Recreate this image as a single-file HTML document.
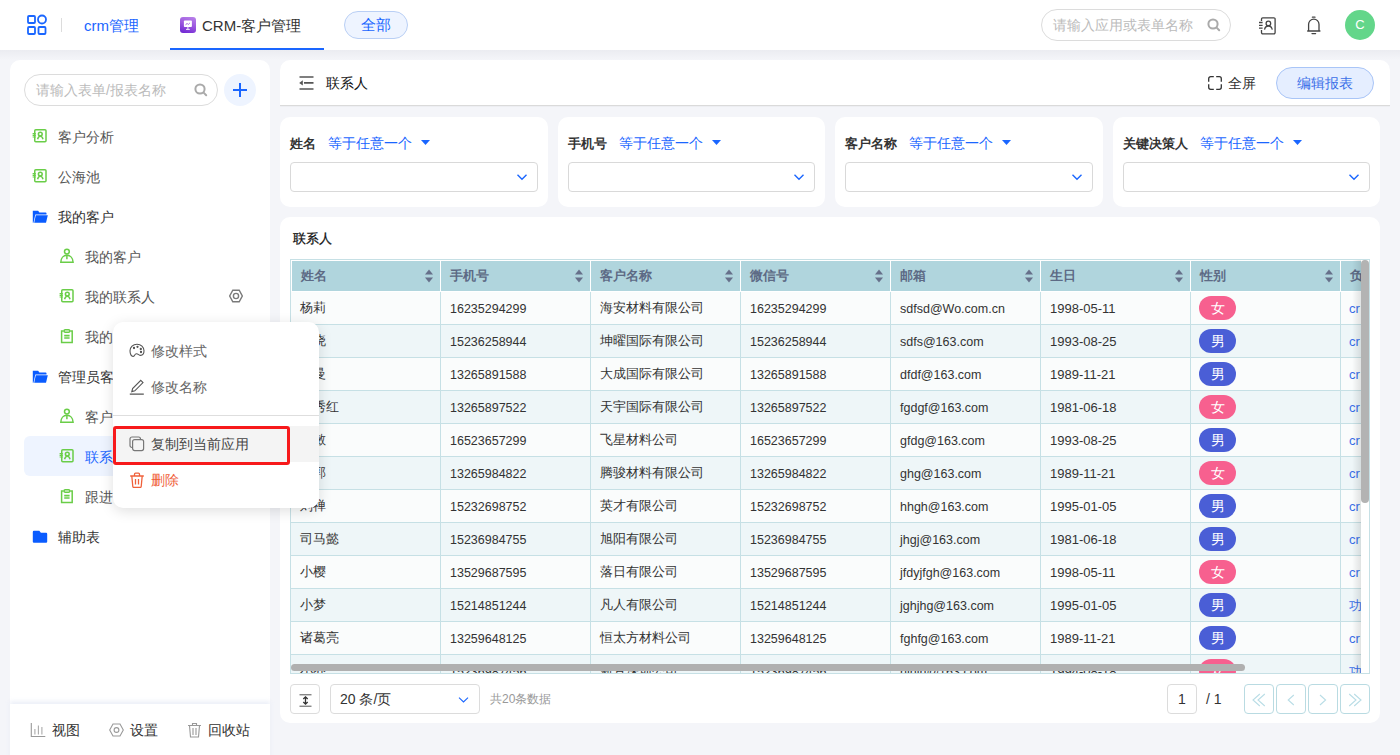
<!DOCTYPE html>
<html><head><meta charset="utf-8">
<style>
*{box-sizing:border-box;margin:0;padding:0}
html,body{width:1400px;height:755px;overflow:hidden}
body{position:relative;background:#f4f5f9;font-family:"Liberation Sans",sans-serif;font-size:14px;color:#333}
.abs{position:absolute}
svg{display:block}
/* top bar */
#top{left:0;top:0;width:1400px;height:50px;background:#fff}
/* sidebar */
#side{left:10px;top:60px;width:260px;height:705px;background:#fff;border-radius:10px}
.sitem{position:absolute;height:40px;line-height:42px;font-size:14px;color:#555;white-space:nowrap}
.sitem .ic{position:absolute;top:0}
/* main */
#hdr{left:280px;top:60px;width:1110px;height:46px;background:#fff;border-radius:10px 10px 0 0;border-bottom:1px solid #dadada;box-shadow:0 1px 1px rgba(0,0,0,0.03)}
.fcard{position:absolute;top:117px;height:90px;background:#fff;border-radius:10px}
.flabel{position:absolute;left:10px;top:16px;font-weight:bold;font-size:13px;line-height:20px;color:#333;white-space:nowrap}
.fop{color:#1a66ff;font-weight:normal;margin-left:12px;font-size:14px}
.fsel{position:absolute;left:10px;top:45px;height:30px;border:1px solid #d9d9d9;border-radius:4px}
#tcard{left:280px;top:217px;width:1100px;height:506px;background:#fff;border-radius:10px}
.th{position:absolute;top:0;width:150px;height:32px;border:1px solid #fff;border-left:0;background:#b0d5dd;color:#5d6a85;font-weight:bold;font-size:13px;line-height:30px;padding-left:9px}
.tr{position:absolute;left:0;width:1200px;height:33px;border-bottom:1px solid #c6e0e5}
.td{position:absolute;top:0;width:150px;height:32px;border-right:1px solid #c6e0e5;font-size:13px;line-height:32px;padding-left:9px;color:#333;white-space:nowrap;overflow:hidden}
.td.num{font-size:12.5px;line-height:34px}
.tag{display:inline-block;width:37px;height:24px;border-radius:12px;color:#fff;text-align:center;line-height:24px;font-size:14px;vertical-align:middle;margin-top:-2px;margin-left:-1px}
.pbtn{position:absolute;height:30px;border:1px solid #dcdcdc;border-radius:4px;text-align:center}
.pbtn.nav{width:30px;border-color:#b9dbe2}
.fsel svg{right:9px !important;top:10px !important}
</style></head><body>

<div id="top" class="abs">
 <svg class="abs" style="left:26px;top:14px" width="22" height="22" viewBox="0 0 22 22" fill="none" stroke="#1a66ff" stroke-width="1.8">
  <rect x="2" y="2" width="7" height="7" rx="1"/><circle cx="16" cy="5.5" r="4"/>
  <rect x="2" y="13" width="7" height="7" rx="1"/><rect x="12.5" y="13" width="7" height="7" rx="1"/>
 </svg>
 <div class="abs" style="left:61px;top:18px;width:1px;height:14px;background:#dcdcdc"></div>
 <div class="abs" style="left:84px;top:15px;font-size:15px;line-height:22px;color:#1a66ff">crm管理</div>
 <div class="abs" style="left:180px;top:17px;width:16px;height:16px;border-radius:3px;background:linear-gradient(200deg,#bb85ea,#9a55de 50%,#6a22d2)"><svg width="16" height="16" viewBox="0 0 16 16"><rect x="3.9" y="3.6" width="8" height="6.4" rx="0.8" fill="#fff"/><path d="M5.6 8.2l1.4-2 1.2 1.4 1.8-1.8" fill="none" stroke="#a76be2" stroke-width="0.9"/><path d="M7.9 10v2.2M6 12.4h3.8" stroke="#fff" stroke-width="0.9"/></svg></div>
 <div class="abs" style="left:202px;top:15px;font-size:15px;line-height:22px;color:#333">CRM-客户管理</div>
 <div class="abs" style="left:170px;top:48px;width:154px;height:2px;background:#1a66ff"></div>
 <div class="abs" style="left:344px;top:11px;width:64px;height:28px;border:1px solid #b9cff5;border-radius:14px;background:#eef4ff;color:#1a66ff;font-size:15px;line-height:26px;text-align:center">全部</div>
 <div class="abs" style="left:1041px;top:9px;width:190px;height:32px;border:1px solid #dcdcdc;border-radius:16px;color:#bbb;font-size:14px;line-height:30px;padding-left:11px">请输入应用或表单名称</div>
 <svg class="abs" style="left:1207px;top:18px" width="14" height="14" viewBox="0 0 14 14" fill="none" stroke="#aaa" stroke-width="2"><circle cx="6" cy="6" r="4.6"/><path d="M9.6 9.6l2.6 2.6" stroke-linecap="round"/></svg>
 <svg class="abs" style="left:1258px;top:16px" width="20" height="20" viewBox="0 0 20 20" fill="none" stroke="#444" stroke-width="1.3"><path d="M3.5 5V3a1.2 1.2 0 0 1 1.2-1.2h11.2A1.2 1.2 0 0 1 17.1 3v13.6a1.2 1.2 0 0 1-1.2 1.2H4.7a1.2 1.2 0 0 1-1.2-1.2V14"/><circle cx="10.4" cy="7.4" r="2.3"/><path d="M6.5 13.6c0.5-2.3 2-3.6 3.9-3.6s3.4 1.3 3.9 3.6"/><path d="M1 6.5h3.6M1 9.4h3.6M1 12.2h3.6"/></svg>
 <svg class="abs" style="left:1304px;top:16px" width="20" height="20" viewBox="0 0 20 20" fill="none" stroke="#444" stroke-width="1.3"><path d="M4.6 14.8V8.3a5.2 5.2 0 0 1 10.4 0v6.5M3.2 15h13.2"/><path d="M8.4 1.2h2.6M8 17.6h3.6" stroke-linecap="round"/></svg>
 <div class="abs" style="left:1345px;top:10px;width:30px;height:30px;border-radius:50%;background:#63d68a;color:#fff;font-size:13px;line-height:30px;text-align:center">C</div>
</div>
<div class="abs" style="left:0;top:50px;width:1400px;height:10px;background:linear-gradient(180deg,#ebecf1,#f4f5f9)"></div>
<div id="side" class="abs">
 <div class="abs" style="left:14px;top:14px;width:194px;height:32px;border:1px solid #dcdcdc;border-radius:16px;color:#bbb;font-size:14px;line-height:30px;padding-left:11px">请输入表单/报表名称</div>
 <svg class="abs" style="left:184px;top:23px" width="14" height="14" viewBox="0 0 14 14" fill="none" stroke="#aaa" stroke-width="2"><circle cx="6" cy="6" r="4.6"/><path d="M9.6 9.6l2.6 2.6" stroke-linecap="round"/></svg>
 <div class="abs" style="left:214px;top:14px;width:32px;height:32px;border-radius:50%;background:#eef4ff">
  <svg width="32" height="32" viewBox="0 0 32 32" stroke="#1a66ff" stroke-width="2"><path d="M16 9v14M9 16h14"/></svg>
 </div>
 <svg class="abs" style="left:22px;top:68px" width="16" height="16" viewBox="0 0 16 16" fill="none" stroke="#6acd48" stroke-width="1.5"><rect x="2.75" y="1.85" width="11.25" height="12" rx="1"/><circle cx="8.3" cy="6.1" r="1.9"/><path d="M5.6 11.3c0.5-2 1.4-3 2.7-3s2.2 1 2.7 3"/><path d="M0.6 5.6h3.2M0.6 7.3h3.2M0.6 9h3.2" stroke-width="1.2"/></svg>
 <div class="sitem" style="left:48px;top:56px">客户分析</div>
 <svg class="abs" style="left:22px;top:108px" width="16" height="16" viewBox="0 0 16 16" fill="none" stroke="#6acd48" stroke-width="1.5"><rect x="2.75" y="1.85" width="11.25" height="12" rx="1"/><circle cx="8.3" cy="6.1" r="1.9"/><path d="M5.6 11.3c0.5-2 1.4-3 2.7-3s2.2 1 2.7 3"/><path d="M0.6 5.6h3.2M0.6 7.3h3.2M0.6 9h3.2" stroke-width="1.2"/></svg>
 <div class="sitem" style="left:48px;top:96px">公海池</div>
 <svg class="abs" style="left:22px;top:150px" width="16" height="14" viewBox="0 0 16 14" fill="#0a5cff"><path d="M0.8 0.8h5.3l1.3 1.6h6.2c0.6 0 0.9 0.3 0.9 0.9v1.2H3.3L1.5 12.8H0.8z"/><path d="M3.8 5.3H15.8L14 12.8H2.2z"/></svg>
 <div class="sitem" style="left:48px;top:136px;color:#333">我的客户</div>
 <svg class="abs" style="left:49px;top:188px" width="16" height="16" viewBox="0 0 16 16" fill="none" stroke="#6acd48" stroke-width="1.5"><circle cx="7.9" cy="3.6" r="2.4"/><path d="M1.8 14.3h12.3C13.9 10 11.3 7.3 7.9 7.3S1.9 10 1.8 14.3z"/><path d="M7.9 7.3v4"/></svg>
 <div class="sitem" style="left:75px;top:176px">我的客户</div>
 <svg class="abs" style="left:49px;top:228px" width="16" height="16" viewBox="0 0 16 16" fill="none" stroke="#6acd48" stroke-width="1.5"><rect x="2.75" y="1.85" width="11.25" height="12" rx="1"/><circle cx="8.3" cy="6.1" r="1.9"/><path d="M5.6 11.3c0.5-2 1.4-3 2.7-3s2.2 1 2.7 3"/><path d="M0.6 5.6h3.2M0.6 7.3h3.2M0.6 9h3.2" stroke-width="1.2"/></svg>
 <div class="sitem" style="left:75px;top:216px">我的联系人</div>
 <svg class="abs" style="left:219px;top:229px" width="14" height="14" viewBox="0 0 14 14" fill="none" stroke="#7a7a7a" stroke-width="1.4"><path d="M3.8 1.2h6.4L13.3 7l-3.1 5.8H3.8L0.7 7z"/><circle cx="7" cy="7" r="2.6"/></svg>
 <svg class="abs" style="left:49px;top:269px" width="16" height="16" viewBox="0 0 16 16" fill="none" stroke="#6acd48" stroke-width="1.5"><path d="M4.6 1.9H2.6v11.5h10.6V1.9h-2"/><rect x="5" y="0.8" width="5.8" height="2.4" rx="1.2"/><path d="M5.2 6.6h5.4M5.2 9h5.4" stroke-width="1.6"/></svg>
 <div class="sitem" style="left:75px;top:256px">我的客户跟进</div>
 <svg class="abs" style="left:22px;top:310px" width="16" height="14" viewBox="0 0 16 14" fill="#0a5cff"><path d="M0.8 0.8h5.3l1.3 1.6h6.2c0.6 0 0.9 0.3 0.9 0.9v1.2H3.3L1.5 12.8H0.8z"/><path d="M3.8 5.3H15.8L14 12.8H2.2z"/></svg>
 <div class="sitem" style="left:48px;top:296px;color:#333">管理员客户</div>
 <svg class="abs" style="left:49px;top:348px" width="16" height="16" viewBox="0 0 16 16" fill="none" stroke="#6acd48" stroke-width="1.5"><circle cx="7.9" cy="3.6" r="2.4"/><path d="M1.8 14.3h12.3C13.9 10 11.3 7.3 7.9 7.3S1.9 10 1.8 14.3z"/><path d="M7.9 7.3v4"/></svg>
 <div class="sitem" style="left:75px;top:336px">客户</div>
 <div class="abs" style="left:14px;top:376px;width:232px;height:40px;border-radius:6px;background:#eef4ff"></div>
 <svg class="abs" style="left:49px;top:388px" width="16" height="16" viewBox="0 0 16 16" fill="none" stroke="#6acd48" stroke-width="1.5"><rect x="2.75" y="1.85" width="11.25" height="12" rx="1"/><circle cx="8.3" cy="6.1" r="1.9"/><path d="M5.6 11.3c0.5-2 1.4-3 2.7-3s2.2 1 2.7 3"/><path d="M0.6 5.6h3.2M0.6 7.3h3.2M0.6 9h3.2" stroke-width="1.2"/></svg>
 <div class="sitem" style="left:75px;top:376px;color:#1a66ff">联系人</div>
 <svg class="abs" style="left:49px;top:429px" width="16" height="16" viewBox="0 0 16 16" fill="none" stroke="#6acd48" stroke-width="1.5"><path d="M4.6 1.9H2.6v11.5h10.6V1.9h-2"/><rect x="5" y="0.8" width="5.8" height="2.4" rx="1.2"/><path d="M5.2 6.6h5.4M5.2 9h5.4" stroke-width="1.6"/></svg>
 <div class="sitem" style="left:75px;top:416px">跟进记录</div>
 <svg class="abs" style="left:22px;top:470px" width="16" height="14" viewBox="0 0 16 14" fill="#0a5cff"><path d="M0.8 1.9a1.1 1.1 0 0 1 1.1-1.1H7.3L8.9 2.8h5.2a1.1 1.1 0 0 1 1.1 1.1v7.8a1.1 1.1 0 0 1-1.1 1.1H1.9a1.1 1.1 0 0 1-1.1-1.1z"/></svg>
 <div class="sitem" style="left:48px;top:456px;color:#333">辅助表</div>
 <div class="abs" style="left:0;top:644px;width:260px;height:61px;background:#fff;box-shadow:0 -3px 4px rgba(230,234,245,0.7)">
  <svg class="abs" style="left:20px;top:19px" width="16" height="16" viewBox="0 0 16 16" fill="none" stroke="#999" stroke-width="1.1"><path d="M1.3 0v13.5h14" stroke="#999"/><path d="M4.9 6v5.5M8.4 2.5v9M11.9 4v7.5" stroke="#aaa"/></svg>
  <div class="abs" style="left:42px;top:16px;font-size:14px;line-height:20px;color:#333">视图</div>
  <svg class="abs" style="left:99px;top:19px" width="15" height="14" viewBox="0 0 15 14" fill="none" stroke="#999" stroke-width="1.1"><path d="M4 1h7l3.3 6L11 13H4L0.7 7z"/><circle cx="7.5" cy="7" r="2.4"/></svg>
  <div class="abs" style="left:120px;top:16px;font-size:14px;line-height:20px;color:#333">设置</div>
  <svg class="abs" style="left:177px;top:18px" width="15" height="16" viewBox="0 0 15 16" fill="none" stroke="#999" stroke-width="1.1"><path d="M1 3.5h13M5.5 3.5V1.5h4v2M2.5 3.5l1 11.5h8l1-11.5M6 6v7M9 6v7"/></svg>
  <div class="abs" style="left:198px;top:16px;font-size:14px;line-height:20px;color:#333">回收站</div>
 </div>
</div>
<div id="hdr" class="abs">
 <svg class="abs" style="left:19px;top:16px" width="15" height="15" viewBox="0 0 15 15" fill="none" stroke="#555" stroke-width="1.6"><path d="M0.5 1h14M5 6.9h9.5M0.5 13h14"/><path d="M0.2 6.9L3.8 4.3v5.2z" fill="#555" stroke="none"/></svg>
 <div class="abs" style="left:46px;top:12px;font-size:14px;line-height:22px;color:#111">联系人</div>
 <svg class="abs" style="left:928px;top:16px" width="14" height="14" viewBox="0 0 14 14" fill="none" stroke="#333" stroke-width="1.3"><path d="M0.7 5.8V2.7a2 2 0 0 1 2-2h3.1M8.2 0.7h3.1a2 2 0 0 1 2 2v3.1M0.7 8.2v3.1a2 2 0 0 0 2 2h3.1M8.2 13.3h3.1a2 2 0 0 0 2-2V8.2"/></svg>
 <div class="abs" style="left:948px;top:12px;font-size:14px;line-height:22px;color:#333">全屏</div>
 <div class="abs" style="left:996px;top:7px;width:98px;height:32px;border:1px solid #a9c5f7;border-radius:16px;background:#e5eeff;color:#3a6ee8;font-size:14px;line-height:30px;text-align:center">编辑报表</div>
</div>
<div class="fcard" style="left:280px;width:268px">
 <div class="flabel">姓名<span class="fop">等于任意一个</span><svg style="display:inline-block;margin-left:9px;vertical-align:3px" width="9" height="5" viewBox="0 0 9 5"><path d="M0 0h9L4.5 5z" fill="#1a66ff"/></svg></div>
 <div class="fsel" style="width:248px"><svg class="abs" style="right:11px;top:10px" width="12" height="8" viewBox="0 0 12 8" fill="none" stroke="#1a66ff" stroke-width="1.4"><path d="M1.5 1.8L6 6.2l4.5-4.4"/></svg></div>
</div>
<div class="fcard" style="left:558px;width:267px">
 <div class="flabel">手机号<span class="fop">等于任意一个</span><svg style="display:inline-block;margin-left:9px;vertical-align:3px" width="9" height="5" viewBox="0 0 9 5"><path d="M0 0h9L4.5 5z" fill="#1a66ff"/></svg></div>
 <div class="fsel" style="width:247px"><svg class="abs" style="right:11px;top:10px" width="12" height="8" viewBox="0 0 12 8" fill="none" stroke="#1a66ff" stroke-width="1.4"><path d="M1.5 1.8L6 6.2l4.5-4.4"/></svg></div>
</div>
<div class="fcard" style="left:835px;width:268px">
 <div class="flabel">客户名称<span class="fop">等于任意一个</span><svg style="display:inline-block;margin-left:9px;vertical-align:3px" width="9" height="5" viewBox="0 0 9 5"><path d="M0 0h9L4.5 5z" fill="#1a66ff"/></svg></div>
 <div class="fsel" style="width:248px"><svg class="abs" style="right:11px;top:10px" width="12" height="8" viewBox="0 0 12 8" fill="none" stroke="#1a66ff" stroke-width="1.4"><path d="M1.5 1.8L6 6.2l4.5-4.4"/></svg></div>
</div>
<div class="fcard" style="left:1113px;width:267px">
 <div class="flabel">关键决策人<span class="fop">等于任意一个</span><svg style="display:inline-block;margin-left:9px;vertical-align:3px" width="9" height="5" viewBox="0 0 9 5"><path d="M0 0h9L4.5 5z" fill="#1a66ff"/></svg></div>
 <div class="fsel" style="width:247px"><svg class="abs" style="right:11px;top:10px" width="12" height="8" viewBox="0 0 12 8" fill="none" stroke="#1a66ff" stroke-width="1.4"><path d="M1.5 1.8L6 6.2l4.5-4.4"/></svg></div>
</div>
<div id="tcard" class="abs">
<div class="abs" style="left:13px;top:12px;font-size:13px;line-height:20px;color:#111;-webkit-text-stroke:0.25px #111">联系人</div>
<div class="abs" style="left:10px;top:42px;width:1080px;height:415px;border:1px solid #c6e0e5;overflow:hidden;background:#fff">
<div class="th" style="left:0px;border-left:1px solid #fff">姓名<svg class="abs" style="right:7px;top:8px" width="8" height="14" viewBox="0 0 8 14" fill="#66708a"><path d="M4 0.5L8 5.5H0z"/><path d="M0 8.5h8L4 13.5z"/></svg></div>
<div class="th" style="left:150px">手机号<svg class="abs" style="right:7px;top:8px" width="8" height="14" viewBox="0 0 8 14" fill="#66708a"><path d="M4 0.5L8 5.5H0z"/><path d="M0 8.5h8L4 13.5z"/></svg></div>
<div class="th" style="left:300px">客户名称<svg class="abs" style="right:7px;top:8px" width="8" height="14" viewBox="0 0 8 14" fill="#66708a"><path d="M4 0.5L8 5.5H0z"/><path d="M0 8.5h8L4 13.5z"/></svg></div>
<div class="th" style="left:450px">微信号<svg class="abs" style="right:7px;top:8px" width="8" height="14" viewBox="0 0 8 14" fill="#66708a"><path d="M4 0.5L8 5.5H0z"/><path d="M0 8.5h8L4 13.5z"/></svg></div>
<div class="th" style="left:600px">邮箱<svg class="abs" style="right:7px;top:8px" width="8" height="14" viewBox="0 0 8 14" fill="#66708a"><path d="M4 0.5L8 5.5H0z"/><path d="M0 8.5h8L4 13.5z"/></svg></div>
<div class="th" style="left:750px">生日<svg class="abs" style="right:7px;top:8px" width="8" height="14" viewBox="0 0 8 14" fill="#66708a"><path d="M4 0.5L8 5.5H0z"/><path d="M0 8.5h8L4 13.5z"/></svg></div>
<div class="th" style="left:900px">性别<svg class="abs" style="right:7px;top:8px" width="8" height="14" viewBox="0 0 8 14" fill="#66708a"><path d="M4 0.5L8 5.5H0z"/><path d="M0 8.5h8L4 13.5z"/></svg></div>
<div class="th" style="left:1050px">负责人</div>
<div class="tr" style="top:32px;background:#fafcfc">
<div class="td" style="left:0px">杨莉</div>
<div class="td num" style="left:150px">16235294299</div>
<div class="td" style="left:300px">海安材料有限公司</div>
<div class="td num" style="left:450px">16235294299</div>
<div class="td num" style="left:600px;font-size:12.5px">sdfsd@Wo.com.cn</div>
<div class="td num" style="left:750px;font-size:13px">1998-05-11</div>
<div class="td" style="left:900px"><span class="tag" style="background:#f7608f">女</span></div>
<div class="td" style="left:1050px;color:#3a6ee8;padding-left:8px;line-height:34px">cr</div>
</div>
<div class="tr" style="top:65px;background:#eef6f8">
<div class="td" style="left:0px">王晓</div>
<div class="td num" style="left:150px">15236258944</div>
<div class="td" style="left:300px">坤曜国际有限公司</div>
<div class="td num" style="left:450px">15236258944</div>
<div class="td num" style="left:600px;font-size:12.5px">sdfs@163.com</div>
<div class="td num" style="left:750px;font-size:13px">1993-08-25</div>
<div class="td" style="left:900px"><span class="tag" style="background:#4a5ed6">男</span></div>
<div class="td" style="left:1050px;color:#3a6ee8;padding-left:8px;line-height:34px">cr</div>
</div>
<div class="tr" style="top:98px;background:#fafcfc">
<div class="td" style="left:0px">张曼</div>
<div class="td num" style="left:150px">13265891588</div>
<div class="td" style="left:300px">大成国际有限公司</div>
<div class="td num" style="left:450px">13265891588</div>
<div class="td num" style="left:600px;font-size:12.5px">dfdf@163.com</div>
<div class="td num" style="left:750px;font-size:13px">1989-11-21</div>
<div class="td" style="left:900px"><span class="tag" style="background:#4a5ed6">男</span></div>
<div class="td" style="left:1050px;color:#3a6ee8;padding-left:8px;line-height:34px">cr</div>
</div>
<div class="tr" style="top:131px;background:#eef6f8">
<div class="td" style="left:0px">李秀红</div>
<div class="td num" style="left:150px">13265897522</div>
<div class="td" style="left:300px">天宇国际有限公司</div>
<div class="td num" style="left:450px">13265897522</div>
<div class="td num" style="left:600px;font-size:12.5px">fgdgf@163.com</div>
<div class="td num" style="left:750px;font-size:13px">1981-06-18</div>
<div class="td" style="left:900px"><span class="tag" style="background:#f7608f">女</span></div>
<div class="td" style="left:1050px;color:#3a6ee8;padding-left:8px;line-height:34px">cr</div>
</div>
<div class="tr" style="top:164px;background:#fafcfc">
<div class="td" style="left:0px">陈敏</div>
<div class="td num" style="left:150px">16523657299</div>
<div class="td" style="left:300px">飞星材料公司</div>
<div class="td num" style="left:450px">16523657299</div>
<div class="td num" style="left:600px;font-size:12.5px">gfdg@163.com</div>
<div class="td num" style="left:750px;font-size:13px">1993-08-25</div>
<div class="td" style="left:900px"><span class="tag" style="background:#4a5ed6">男</span></div>
<div class="td" style="left:1050px;color:#3a6ee8;padding-left:8px;line-height:34px">cr</div>
</div>
<div class="tr" style="top:197px;background:#eef6f8">
<div class="td" style="left:0px">吴郭</div>
<div class="td num" style="left:150px">13265984822</div>
<div class="td" style="left:300px">腾骏材料有限公司</div>
<div class="td num" style="left:450px">13265984822</div>
<div class="td num" style="left:600px;font-size:12.5px">ghg@163.com</div>
<div class="td num" style="left:750px;font-size:13px">1989-11-21</div>
<div class="td" style="left:900px"><span class="tag" style="background:#f7608f">女</span></div>
<div class="td" style="left:1050px;color:#3a6ee8;padding-left:8px;line-height:34px">cr</div>
</div>
<div class="tr" style="top:230px;background:#fafcfc">
<div class="td" style="left:0px">刘禅</div>
<div class="td num" style="left:150px">15232698752</div>
<div class="td" style="left:300px">英才有限公司</div>
<div class="td num" style="left:450px">15232698752</div>
<div class="td num" style="left:600px;font-size:12.5px">hhgh@163.com</div>
<div class="td num" style="left:750px;font-size:13px">1995-01-05</div>
<div class="td" style="left:900px"><span class="tag" style="background:#4a5ed6">男</span></div>
<div class="td" style="left:1050px;color:#3a6ee8;padding-left:8px;line-height:34px">cr</div>
</div>
<div class="tr" style="top:263px;background:#eef6f8">
<div class="td" style="left:0px">司马懿</div>
<div class="td num" style="left:150px">15236984755</div>
<div class="td" style="left:300px">旭阳有限公司</div>
<div class="td num" style="left:450px">15236984755</div>
<div class="td num" style="left:600px;font-size:12.5px">jhgj@163.com</div>
<div class="td num" style="left:750px;font-size:13px">1981-06-18</div>
<div class="td" style="left:900px"><span class="tag" style="background:#4a5ed6">男</span></div>
<div class="td" style="left:1050px;color:#3a6ee8;padding-left:8px;line-height:34px">cr</div>
</div>
<div class="tr" style="top:296px;background:#fafcfc">
<div class="td" style="left:0px">小樱</div>
<div class="td num" style="left:150px">13529687595</div>
<div class="td" style="left:300px">落日有限公司</div>
<div class="td num" style="left:450px">13529687595</div>
<div class="td num" style="left:600px;font-size:12.5px">jfdyjfgh@163.com</div>
<div class="td num" style="left:750px;font-size:13px">1998-05-11</div>
<div class="td" style="left:900px"><span class="tag" style="background:#f7608f">女</span></div>
<div class="td" style="left:1050px;color:#3a6ee8;padding-left:8px;line-height:34px">cr</div>
</div>
<div class="tr" style="top:329px;background:#eef6f8">
<div class="td" style="left:0px">小梦</div>
<div class="td num" style="left:150px">15214851244</div>
<div class="td" style="left:300px">凡人有限公司</div>
<div class="td num" style="left:450px">15214851244</div>
<div class="td num" style="left:600px;font-size:12.5px">jghjhg@163.com</div>
<div class="td num" style="left:750px;font-size:13px">1995-01-05</div>
<div class="td" style="left:900px"><span class="tag" style="background:#4a5ed6">男</span></div>
<div class="td" style="left:1050px;color:#3a6ee8;padding-left:8px;line-height:34px">功</div>
</div>
<div class="tr" style="top:362px;background:#fafcfc">
<div class="td" style="left:0px">诸葛亮</div>
<div class="td num" style="left:150px">13259648125</div>
<div class="td" style="left:300px">恒太方材料公司</div>
<div class="td num" style="left:450px">13259648125</div>
<div class="td num" style="left:600px;font-size:12.5px">fghfg@163.com</div>
<div class="td num" style="left:750px;font-size:13px">1989-11-21</div>
<div class="td" style="left:900px"><span class="tag" style="background:#4a5ed6">男</span></div>
<div class="td" style="left:1050px;color:#3a6ee8;padding-left:8px;line-height:34px">cr</div>
</div>
<div class="tr" style="top:395px;background:#eef6f8">
<div class="td" style="left:0px">小乔</div>
<div class="td num" style="left:150px">15236987456</div>
<div class="td" style="left:300px">新月深圳公司</div>
<div class="td num" style="left:450px">15236987456</div>
<div class="td num" style="left:600px;font-size:12.5px">hjhjh@163.com</div>
<div class="td num" style="left:750px;font-size:13px">1994-08-18</div>
<div class="td" style="left:900px"><span class="tag" style="background:#f7608f">女</span></div>
<div class="td" style="left:1050px;color:#3a6ee8;padding-left:8px;line-height:34px">功</div>
</div>
<div class="abs" style="left:1061px;top:0;width:9px;height:413px;background:linear-gradient(90deg,rgba(0,0,0,0),rgba(0,0,0,0.10))"></div>
<div class="abs" style="left:1070px;top:0;width:8px;height:413px;background:#fff"></div>
<div class="abs" style="left:1070px;top:0;width:8px;height:243px;border-radius:4px;background:#b3b3b3"></div>
<div class="abs" style="left:0;top:404px;width:954px;height:7px;border-radius:4px;background:#b0b0b0"></div>
</div>
<div class="pbtn" style="left:10px;top:467px;width:30px"><svg class="abs" style="left:8px;top:9px" width="13" height="13" viewBox="0 0 13 13" fill="none" stroke="#333" stroke-width="1"><path d="M0.5 0.8h12M0.5 12.2h12" stroke="#555"/><path d="M6.5 3v7M4.3 5l2.2-2.2L8.7 5M4.3 8l2.2 2.2L8.7 8" stroke-width="1.3"/></svg></div>
<div class="pbtn" style="left:50px;top:467px;width:150px;text-align:left;padding-left:9px;font-size:14px;line-height:28px;color:#333">20 条/页<svg class="abs" style="right:10px;top:11px" width="11" height="8" viewBox="0 0 11 8" fill="none" stroke="#1a66ff" stroke-width="1.1"><path d="M1 1.6L5.5 6l4.5-4.4"/></svg></div>
<div class="abs" style="left:210px;top:474px;font-size:12px;line-height:16px;color:#999">共20条数据</div>
<div class="pbtn" style="left:887px;top:467px;width:30px;line-height:28px;font-size:14px;color:#333">1</div>
<div class="abs" style="left:926px;top:473px;font-size:14px;line-height:18px;color:#333">/ 1</div>
<div class="pbtn nav" style="left:964px;top:467px"><svg width="28" height="28" viewBox="0 0 28 28" fill="none" stroke="#b9dde6" stroke-width="1.1"><path d="M14.8 9L8 15l6.8 6M19.8 9L13 15l6.8 6"/></svg></div>
<div class="pbtn nav" style="left:996px;top:467px"><svg width="28" height="28" viewBox="0 0 28 28" fill="none" stroke="#b9dde6" stroke-width="1.1"><path d="M16.8 10L11.2 15l5.6 5"/></svg></div>
<div class="pbtn nav" style="left:1028px;top:467px"><svg width="28" height="28" viewBox="0 0 28 28" fill="none" stroke="#b9dde6" stroke-width="1.1"><path d="M11 10l5.6 5-5.6 5"/></svg></div>
<div class="pbtn nav" style="left:1060px;top:467px"><svg width="28" height="28" viewBox="0 0 28 28" fill="none" stroke="#b9dde6" stroke-width="1.1"><path d="M8.2 9l6.8 6-6.8 6M13.2 9l6.8 6-6.8 6"/></svg></div>

</div>

<div id="menu" class="abs" style="left:113px;top:322px;width:206px;height:186px;background:#fff;border-radius:10px;box-shadow:0 3px 14px rgba(0,0,0,0.13);overflow:hidden">
 <svg class="abs" style="left:16px;top:21px" width="16" height="16" viewBox="0 0 16 16" fill="none" stroke="#555" stroke-width="1.1"><path d="M8 1.2C4 1.2 1 4.2 1 7.8c0 3.4 1.4 5.6 3 5.6 1.8 0 1.4-2.6 3.4-2.6 2 0 2.4 1.6 4.2 1.6 2.2 0 3.4-2 3.4-4.6C15 4 12 1.2 8 1.2z"/><circle cx="5" cy="5" r="0.6" fill="#555"/><circle cx="8.5" cy="3.8" r="0.6" fill="#555"/><circle cx="11.8" cy="6" r="0.6" fill="#555"/><circle cx="12" cy="9" r="0.6" fill="#555"/></svg>
 <div class="abs" style="left:38px;top:19px;font-size:14px;line-height:20px;color:#666">修改样式</div>
 <svg class="abs" style="left:16px;top:57px" width="16" height="16" viewBox="0 0 16 16" fill="none" stroke="#555" stroke-width="1.1"><path d="M11.8 1.4l2.2 2.2-8.2 8.2-3 0.8 0.8-3z"/><path d="M0.8 15.2h14" stroke-width="1.2"/></svg>
 <div class="abs" style="left:38px;top:55px;font-size:14px;line-height:20px;color:#666">修改名称</div>
 <div class="abs" style="left:0;top:93px;width:206px;height:1px;background:#dedede"></div>
 <div class="abs" style="left:0;top:104px;width:206px;height:36px;background:#f4f4f4"></div>
 <div class="abs" style="left:0;top:104px;width:177px;height:39px;border:3px solid #f7191b;border-radius:3px"></div>
 <svg class="abs" style="left:16px;top:114px" width="16" height="16" viewBox="0 0 16 16" fill="none" stroke="#777" stroke-width="1.2"><rect x="1" y="1" width="10.5" height="10.5" rx="2"/><rect x="3.6" y="3.6" width="11" height="11" rx="2" fill="#f4f4f4"/></svg>
 <div class="abs" style="left:38px;top:112px;font-size:14px;line-height:20px;color:#444">复制到当前应用</div>
 <svg class="abs" style="left:16px;top:150px" width="16" height="16" viewBox="0 0 16 16" fill="none" stroke="#f0603a" stroke-width="1.3"><path d="M1.2 4h13.6M5.5 4V2.2a1 1 0 0 1 1-1h3a1 1 0 0 1 1 1V4M2.8 4l1 10.5a1 1 0 0 0 1 0.9h6.4a1 1 0 0 0 1-0.9L13.2 4M6.5 7v5.5M9.5 7v5.5"/></svg>
 <div class="abs" style="left:38px;top:148px;font-size:14px;line-height:20px;color:#f0603a">删除</div>
</div>
</body></html>
